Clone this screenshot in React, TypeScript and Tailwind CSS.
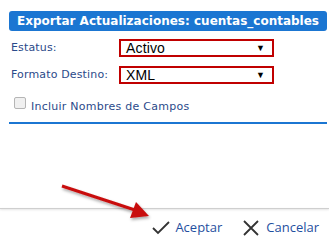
import React from 'react';

const Select: React.FC<{ value: string }> = ({ value }) => (
  <div className="w-[155px] h-[18px] border-2 border-[#c00000] bg-white flex items-center justify-between pl-[5px] pr-[7px] text-[14px] text-black leading-none font-['Liberation_Sans',sans-serif]">
    <span>{value}</span>
    <span className="text-[9px]">▼</span>
  </div>
);

const App: React.FC = () => {
  return (
    <div className="w-[329px] h-[247px] bg-white flex flex-col relative overflow-hidden font-['DejaVu_Sans',sans-serif]">
      <div className="pl-[9px] pr-[2px] pt-[11px]">
        <div className="h-[20px] rounded-[3px] bg-[#1b76d2] text-white font-bold text-[12px] pl-[8px] flex items-center">
          Exportar Actualizaciones: cuentas_contables
        </div>
        <div className="flex items-center mt-[8px] pl-[2px] text-[11px] tracking-[0.15px] text-[#2b4a8a]">
          <span className="w-[108px]">Estatus:</span>
          <Select value="Activo" />
        </div>
        <div className="flex items-center mt-[9px] pl-[2px] text-[11px] tracking-[0.15px] text-[#2b4a8a]">
          <span className="w-[108px]">Formato Destino:</span>
          <Select value="XML" />
        </div>
        <div className="flex items-start mt-[13px] pl-[5px] text-[11px] tracking-[0.25px] text-[#2b4a8a]">
          <span className="w-[12px] h-[12px] rounded-[2px] border border-[#b5b5b5] bg-[#f0f0f0]" />
          <span className="ml-[5px] mt-[3px] leading-[13px]">Incluir Nombres de Campos</span>
        </div>
        <div className="mt-[9px] h-[2px] bg-[#1b76d2]" />
      </div>
      <div className="flex-1" />
      <div className="h-[1px] bg-[#cfcfcf] shadow-[0_1px_2px_rgba(0,0,0,0.15)]" />
      <div className="h-[38px] flex items-center justify-end pr-[10px] text-[13px] text-[#1f4fa0] font-['Open_Sans',sans-serif]">
        <svg width="18" height="14" viewBox="0 0 18 14" className="mr-[5px]">
          <path d="M1 7 L6 12 L17 1" fill="none" stroke="#333" strokeWidth="1.8" />
        </svg>
        <span>Aceptar</span>
        <svg width="16" height="16" viewBox="0 0 16 16" className="ml-[21px] mr-[7px]">
          <path d="M1 1 L15 15 M15 1 L1 15" fill="none" stroke="#333" strokeWidth="1.8" />
        </svg>
        <span>Cancelar</span>
      </div>
      <svg className="absolute left-0 top-0" width="329" height="247" viewBox="0 0 329 247">
        <defs>
          <filter id="sh" x="-20%" y="-50%" width="140%" height="200%">
            <feDropShadow dx="1" dy="2" stdDeviation="1.5" floodColor="#000" floodOpacity="0.35" />
          </filter>
        </defs>
        <g filter="url(#sh)">
          <line x1="62" y1="186" x2="135" y2="210" stroke="#c81010" strokeWidth="3" />
          <polygon points="149,216 130,218 136,202" fill="#c81010" />
        </g>
      </svg>
    </div>
  );
};

export default App;
